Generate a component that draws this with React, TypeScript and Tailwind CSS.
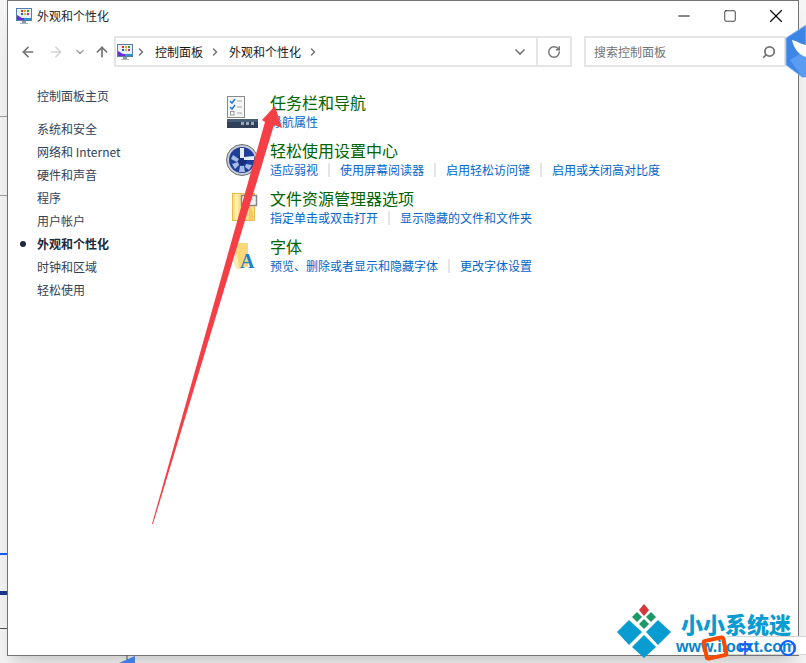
import { ArrowLeft, ArrowRight, ArrowUp, ChevronDown, ChevronRight, Minus, RotateCw, Search, Square, X } from "lucide-react"

const sideLinks = ["系统和安全", "网络和 Internet", "硬件和声音", "程序", "用户帐户", "外观和个性化", "时钟和区域", "轻松使用"]

function PanelIcon() {
  return (
    <svg viewBox="0 0 16 16" className="w-4 h-4 shrink-0">
      <rect x="0.5" y="0.5" width="15" height="12" fill="#e8f0f8" stroke="#5a7fa5" />
      <path d="M1 7 L1 12 L15 12 L15 10 L6 10 Z" fill="#6a2fd8" />
      <path d="M8 10 L15 10 L15 12 L8 12 Z" fill="#2d8fd8" />
      <rect x="5" y="2" width="2" height="2" fill="#e03030" />
      <rect x="8" y="2" width="2" height="2" fill="#f0a020" />
      <rect x="11" y="2" width="2" height="2" fill="#30a030" />
      <rect x="5" y="5" width="2" height="2" fill="#2060d0" />
      <rect x="8" y="5" width="2" height="2" fill="#d0c020" />
      <rect x="11" y="5" width="2" height="2" fill="#c03090" />
      <rect x="6" y="13" width="4" height="2" fill="#8a9aaa" />
      <rect x="4" y="15" width="8" height="1" fill="#aab4be" />
    </svg>
  )
}

function TaskbarIcon() {
  return (
    <svg viewBox="0 0 32 32" className="w-8 h-8">
      <rect x="1.5" y="0.5" width="17" height="21" fill="#f6f6f6" stroke="#8a8a8a" />
      <path d="M4 5 L6 7 L9 3" fill="none" stroke="#1f7ad8" strokeWidth="1.5" />
      <path d="M4 11 L6 13 L9 9" fill="none" stroke="#1f7ad8" strokeWidth="1.5" />
      <rect x="4.5" y="15.5" width="3.5" height="3.5" fill="#fff" stroke="#9a9a9a" />
      <path d="M11 5 H16 M11 11 H16 M11 17 H16" stroke="#a8a8a8" />
      <rect x="1" y="23" width="32" height="9" fill="#2f4058" />
      <rect x="1" y="23" width="32" height="3" fill="#4a5d78" />
      <rect x="15" y="26" width="3" height="3" fill="#9aa8b8" />
      <rect x="20" y="26" width="3" height="3" fill="#9aa8b8" />
      <rect x="25" y="26" width="3" height="3" fill="#9aa8b8" />
    </svg>
  )
}

function EaseIcon() {
  return (
    <svg viewBox="0 0 32 32" className="w-8 h-8">
      <circle cx="16" cy="16" r="15.5" fill="#c8ccd4" stroke="#6a7078" />
      <circle cx="16" cy="16" r="13" fill="#1f3f9a" />
      <circle cx="16" cy="16" r="5" fill="#16307e" />
      <path d="M14 4 H18 V14 H14 Z" fill="#e8eef8" />
      <path d="M18 13 L28 12 L28 16 L18 16 Z" fill="#e8eef8" />
      <path d="M7 11 L13 15 L11 18 L5 15 Z" fill="#a8bce8" />
      <path d="M6 20 L12 18 L13 21 L9 25 Z" fill="#a8bce8" />
      <path d="M14 22 L18 22 L19 28 L13 28 Z" fill="#a8bce8" />
      <path d="M20 20 L26 21 L23 26 L19 23 Z" fill="#a8bce8" />
    </svg>
  )
}

function FolderOptionsIcon() {
  return (
    <svg viewBox="0 0 32 32" className="w-8 h-8">
      <rect x="6.5" y="1.5" width="22" height="27" fill="#fbe08a" stroke="#e8bc4c" />
      <path d="M9 2 H12 V28 H9 Z" fill="#fdeeb8" />
      <path d="M23 14 L27 20 V28 H23 Z" fill="#f6c860" />
      <rect x="15.5" y="3.5" width="15" height="10" fill="#f4f4f4" stroke="#85858c" strokeWidth="1.5" />
      <path d="M19 7 H27 M19 10 H24" stroke="#9a9a9a" />
    </svg>
  )
}

function FontsIcon() {
  return (
    <svg viewBox="0 0 32 32" className="w-8 h-8">
      <path d="M11 3 L22 3 V27 L11 29 L8 24 Z" fill="#f8d878" />
      <path d="M8 24 L11 14 L13 27 L11 29 Z" fill="#fbeebc" />
      <text x="14" y="28" fontSize="20" fontWeight="700" fontFamily="'Liberation Serif', serif" fill="#1f7fc8">A</text>
    </svg>
  )
}

const sections = [
  { title: "任务栏和导航", icon: TaskbarIcon, links: ["导航属性"] },
  { title: "轻松使用设置中心", icon: EaseIcon, links: ["适应弱视", "使用屏幕阅读器", "启用轻松访问键", "启用或关闭高对比度"] },
  { title: "文件资源管理器选项", icon: FolderOptionsIcon, links: ["指定单击或双击打开", "显示隐藏的文件和文件夹"] },
  { title: "字体", icon: FontsIcon, links: ["预览、删除或者显示和隐藏字体", "更改字体设置"] },
]

export default function App() {
  return (
    <div className="relative w-[806px] h-[663px] overflow-hidden bg-neutral-100 font-['Noto_Sans_CJK_SC',sans-serif] text-xs">
      {/* window behind */}
      <div className="absolute left-0 top-[116px] w-2 h-px bg-neutral-400" />
      <div className="absolute left-0 top-[195px] w-2 h-px bg-neutral-400" />
      <div className="absolute left-0 top-[553px] w-2 h-0.5 bg-blue-600" />
      <div className="absolute left-0 top-[591px] w-2 h-1 bg-blue-900" />
      <div className="absolute left-0 top-[628px] w-2 h-px bg-neutral-600" />

      <div className="relative ml-[7px] w-[792px] h-[656px] flex flex-col border border-neutral-500 bg-white shadow-xl">
        {/* title bar */}
        <div className="h-7.5 shrink-0 flex items-center pl-2">
          <PanelIcon />
          <span className="ml-1.25 text-neutral-800">外观和个性化</span>
          <div className="ml-auto flex items-center gap-0.5 text-black">
            <div className="w-11 h-6 flex items-center justify-center"><Minus className="w-4.5 h-4.5" strokeWidth={1.25} absoluteStrokeWidth /></div>
            <div className="w-11 h-6 flex items-center justify-center"><Square className="w-3.5 h-3.5" strokeWidth={1.25} absoluteStrokeWidth /></div>
            <div className="w-11 h-6 flex items-center justify-center"><X className="w-5.5 h-5.5" strokeWidth={1.25} absoluteStrokeWidth /></div>
          </div>
        </div>

        {/* nav row */}
        <div className="mt-1.25 h-7.75 shrink-0 flex items-center pr-3">
          <ArrowLeft className="ml-3 w-4 h-4 text-neutral-500" strokeWidth={2.5} />
          <ArrowRight className="ml-3 w-4 h-4 text-neutral-300" strokeWidth={2.5} />
          <ChevronDown className="ml-2.5 w-3 h-3 text-neutral-400" strokeWidth={3} />
          <ArrowUp className="ml-2 w-4 h-4 text-neutral-500" strokeWidth={2.5} />
          <div className="ml-1 flex-1 h-full flex items-center border-2 border-neutral-200 text-neutral-900">
            <div className="ml-px"><PanelIcon /></div>
            <ChevronRight className="ml-0.5 w-3 h-3 text-neutral-500" strokeWidth={3} />
            <span className="ml-2">控制面板</span>
            <ChevronRight className="ml-1.5 w-3 h-3 text-neutral-500" strokeWidth={3} />
            <span className="ml-2">外观和个性化</span>
            <ChevronRight className="ml-1.5 w-3 h-3 text-neutral-500" strokeWidth={3} />
            <ChevronDown className="ml-auto mr-2 w-4 h-4 text-neutral-500" strokeWidth={2.5} />
            <div className="w-8.5 h-full flex items-center justify-center border-l-2 border-neutral-200">
              <RotateCw className="w-3.5 h-3.5 text-neutral-500" strokeWidth={2.5} />
            </div>
          </div>
          <div className="ml-3 w-[202px] h-full flex items-center justify-between border-2 border-neutral-200 pl-2 pr-2 text-neutral-500">
            <span>搜索控制面板</span>
            <Search className="w-3.5 h-3.5 -scale-x-100 text-neutral-500" strokeWidth={3} />
          </div>
        </div>

        <div className="flex flex-1">
          {/* sidebar */}
          <div className="w-52 shrink-0 pt-4.25 pl-3 text-slate-700 leading-[23px]">
            <div className="pl-4.25 mb-2.5">控制面板主页</div>
            {sideLinks.map((name) => {
              const active = name === "外观和个性化"
              return (
                <div key={name} className={active ? "flex items-center font-bold text-slate-800" : "flex items-center"}>
                  <div className="w-4.25 shrink-0">{active && <div className="w-1.5 h-1.5 rounded-full bg-slate-800" />}</div>
                  {name}
                </div>
              )
            })}
          </div>

          {/* main */}
          <div className="flex-1 pl-2.5 pt-6.25">
            {sections.map((section) => (
              <div key={section.title} className="h-12 flex gap-3">
                <div className="mt-1"><section.icon /></div>
                <div>
                  <div className="text-base leading-5 text-[#006400]">{section.title}</div>
                  <div className="flex items-center gap-2.5 leading-5 text-[#0066cc]">
                    {section.links.map((link, i) => (
                      <div key={link} className="flex items-center gap-2.5">
                        {i > 0 && <div className="w-0.5 h-3.5 bg-neutral-200" />}
                        {link}
                      </div>
                    ))}
                  </div>
                </div>
              </div>
            ))}
          </div>
        </div>
      </div>

      {/* blue badge on the right edge and corner at the bottom */}
      <svg className="absolute inset-0 w-full h-full pointer-events-none" viewBox="0 0 806 663">
        <path d="M806 25 L786 38 L786 65 L802 77 L806 77 Z" fill="#3d86e6" stroke="#8ab8f4" />
        <path d="M790 60 L806 50 V77 H802 Z" fill="#5a9cf0" />
        <path d="M792 40 C797 41 800 44 806 45 V57 C799 55 794 49 792 40 Z" fill="#fff" />
        <path d="M119 663 L135 656 V663 Z" fill="#3d7ce0" />
        <path d="M127 655 V660" stroke="#555" />

        {/* red arrow */}
        <path d="M275 106 L282 128 L274 125 L153 524 L152 524 L265 122 L262 120 Z" fill="#f43f46" />

        {/* site logo */}
        <path d="M644 604 L649 610 L644 616 L639 610 Z" fill="#d8363a" />
        <path d="M637 612 L642 617 L637 622 L632 617 Z" fill="#1c9a66" />
        <path d="M651 612 L656 617 L651 622 L646 617 Z" fill="#1c9a66" />
        <path d="M644 619 L649 624 L644 629 L639 624 Z" fill="#1c9a66" />
        <path d="M629 620 L642 632 L629 645 L617 632 Z" fill="#0a9bd0" />
        <path d="M658 620 L671 632 L658 645 L646 632 Z" fill="#0a9bd0" />
        <path d="M644 635 L656 647 L644 658 L632 647 Z" fill="#0a9bd0" />
      </svg>

      {/* watermark */}
      <div className="absolute left-[681px] top-[609px] text-[22px] leading-7 font-black text-[#0a9bd0] whitespace-nowrap">小小系统迷</div>
      <div className="absolute left-[727px] top-[636px] right-0 h-[19px] bg-white border-y border-neutral-300" />
      <div className="absolute left-[676px] top-[637px] text-base leading-5 font-bold text-sky-600 whitespace-nowrap font-['Liberation_Sans',sans-serif]">www.ilocxt.com</div>
      <div className="absolute left-[703px] top-[637px] w-6 h-5.5 -rotate-12 rounded-sm border-4 border-orange-600" />
      <div className="absolute left-[738px] top-[637px] text-sm leading-5 font-bold text-blue-600">中</div>
      <div className="absolute left-[780px] top-[640px] w-4 h-4 rounded-full border-2 border-blue-600" />
    </div>
  )
}
